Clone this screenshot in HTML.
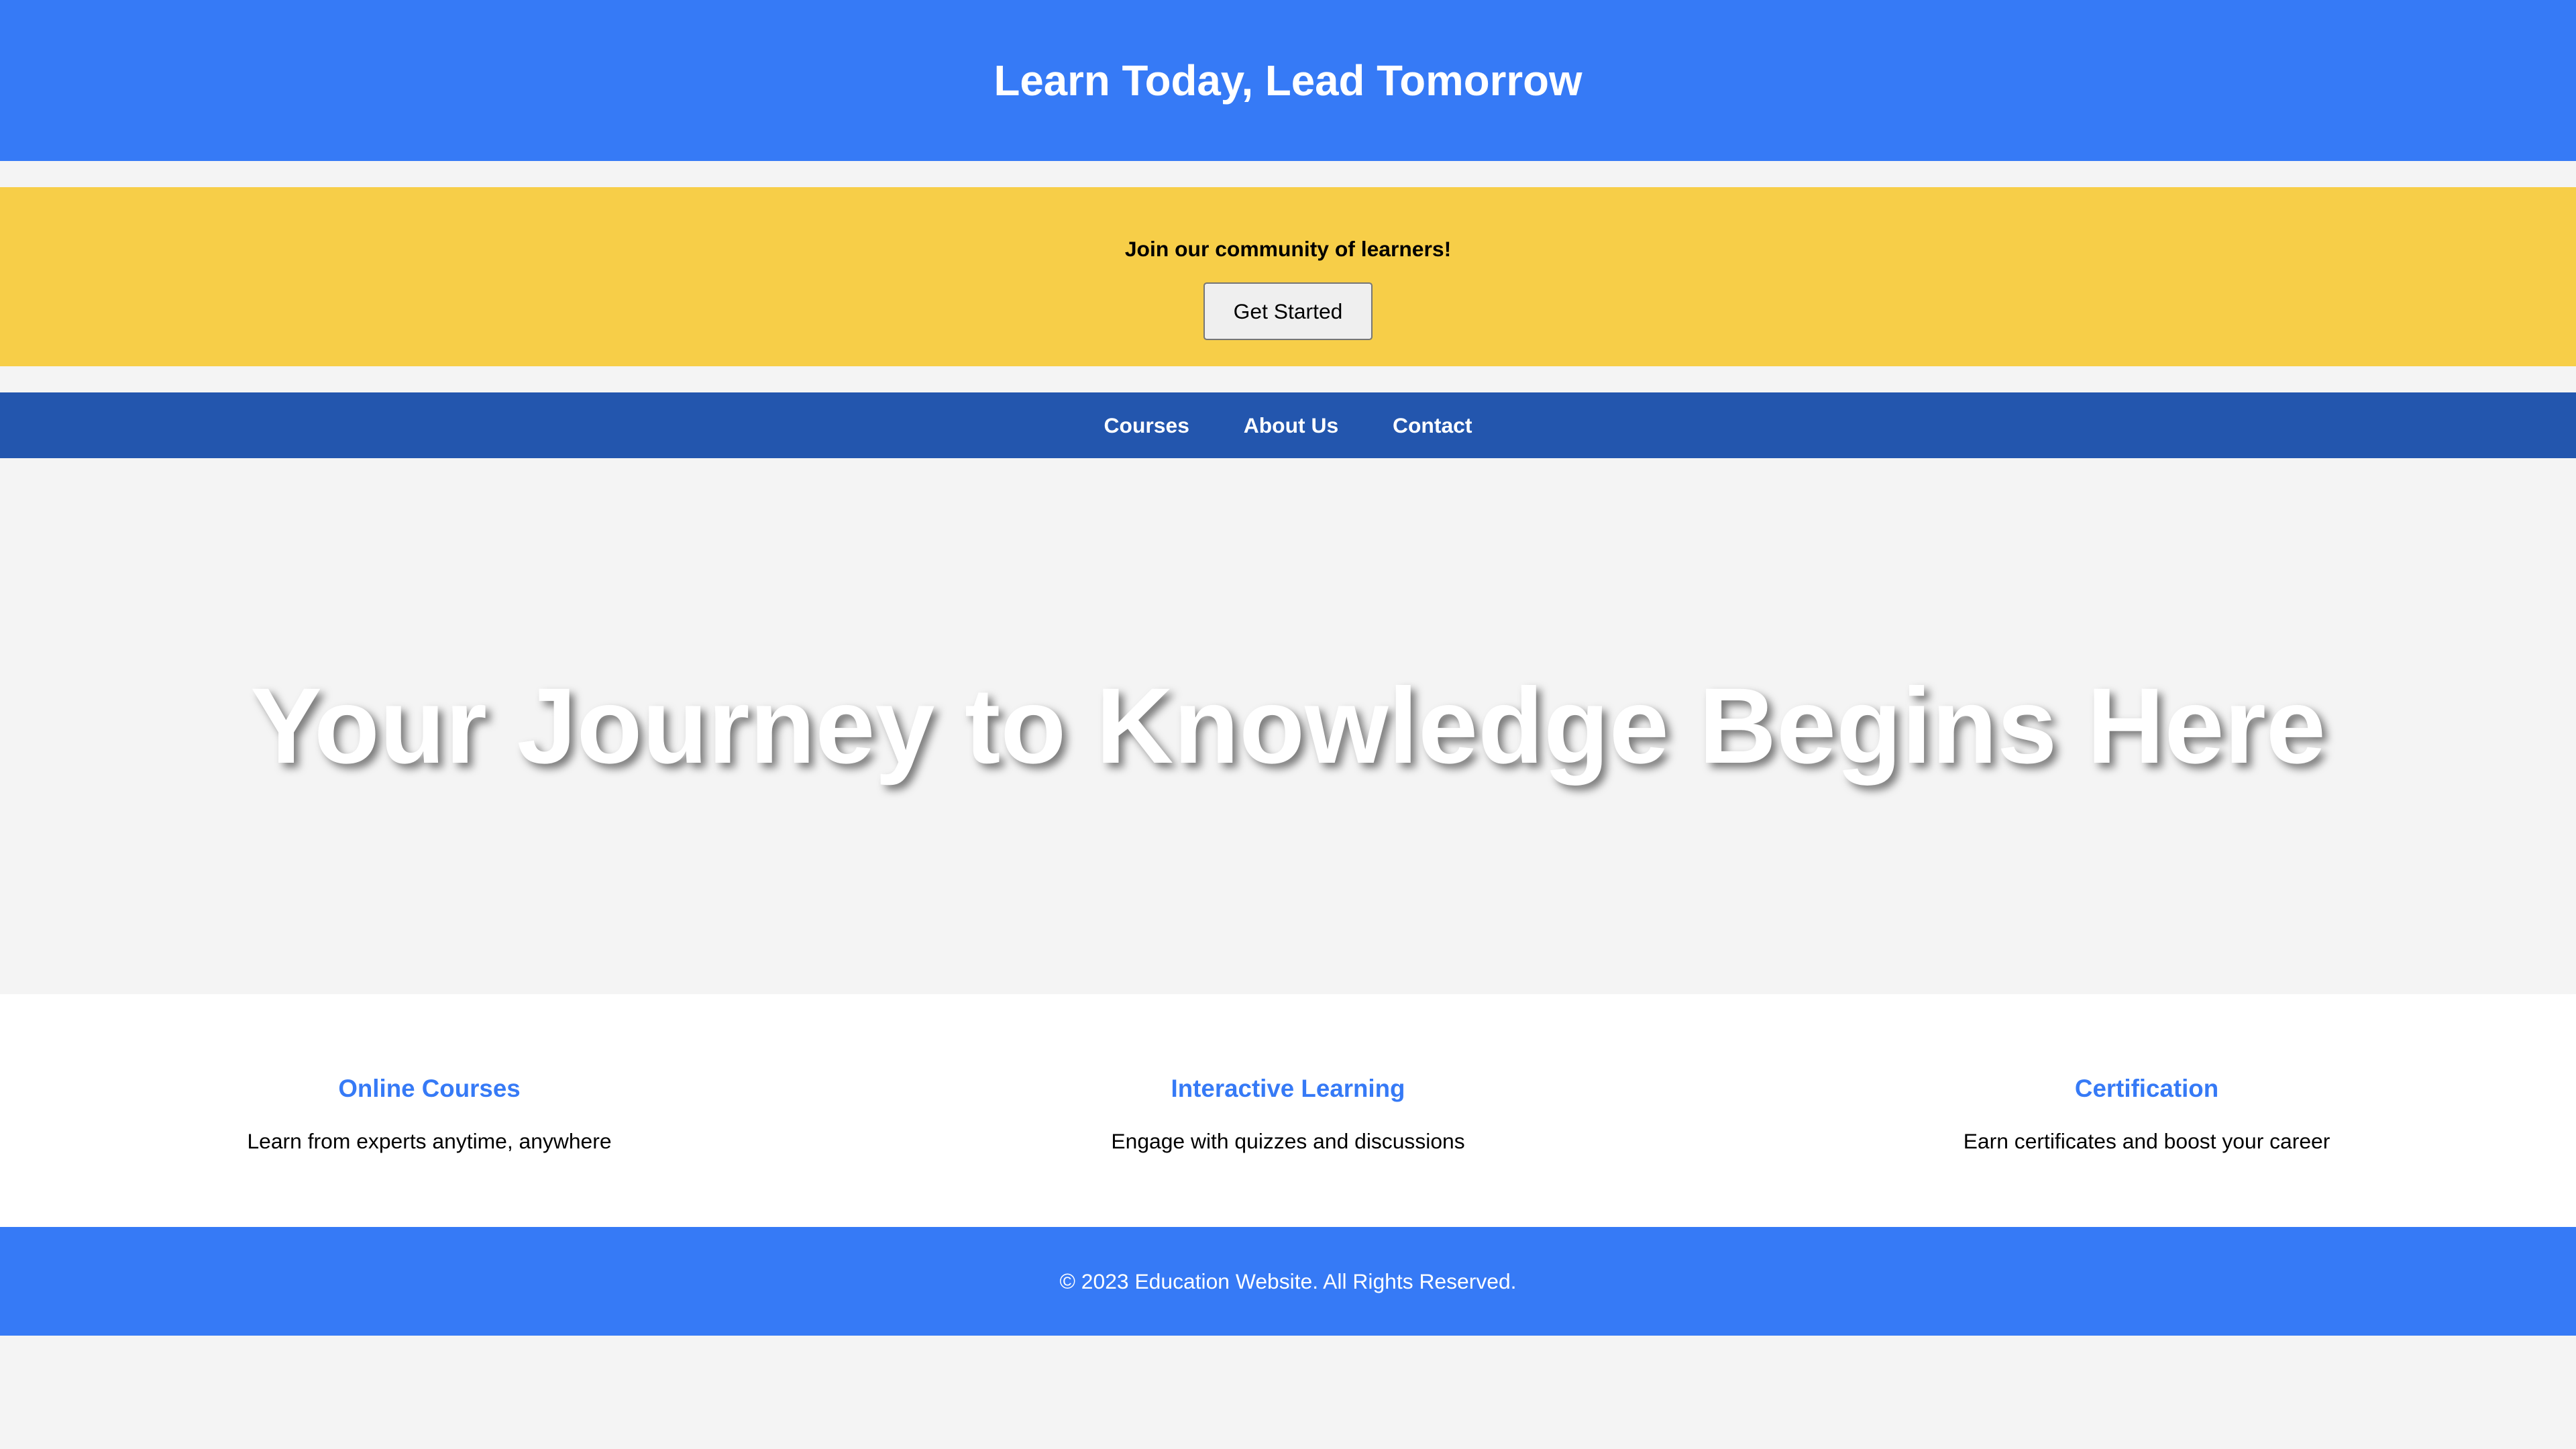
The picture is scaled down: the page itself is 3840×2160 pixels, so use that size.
<!DOCTYPE html>
<html><head><meta charset="utf-8"><style>
html{zoom:2.4490}
body{margin:0;background:#f4f4f4;font-family:"Liberation Sans",Arial,sans-serif;width:1568px;height:882px;overflow:hidden}
header{background:#367af6;height:98px;display:flex;align-items:center;justify-content:center}
header h1{margin:0;color:#fff;font-size:26px;font-weight:bold}
.cta{background:#f7ce48;margin-top:16px;height:109px;text-align:center;box-sizing:border-box;padding-top:30px}
.cta p{margin:0;font-weight:bold;font-size:13px;color:#000}
.cta button{margin-top:13px;width:103px;height:35px;font-family:inherit;font-size:13px;background:#efefef;border:1px solid #767676;border-radius:2px;color:#000}
nav{background:#2356ae;margin-top:16px;height:40px;display:flex;justify-content:center;align-items:center;gap:33px}
nav a{color:#fff;font-weight:bold;font-size:13px;text-decoration:none}
.hero{height:326px;display:flex;align-items:center;justify-content:center}
.hero h2{margin:0;color:#fff;font-size:65.4px;font-weight:bold;text-shadow:3px 3px 5px rgba(0,0,0,.5)}
.features{background:#fff;height:142px;display:flex}
.features div{flex:1;text-align:center;padding-top:49px}
.features h3{margin:0;color:#367af6;font-size:15px}
.features p{margin:16px 0 0;font-size:13px;color:#000}
footer{background:#367af6;height:66px;display:flex;align-items:center;justify-content:center;color:#fff;font-size:13px}
</style></head><body>
<header><h1>Learn Today, Lead Tomorrow</h1></header>
<div class="cta"><p>Join our community of learners!</p><button>Get Started</button></div>
<nav><a>Courses</a><a>About Us</a><a>Contact</a></nav>
<div class="hero"><h2>Your Journey to Knowledge Begins Here</h2></div>
<div class="features">
<div><h3>Online Courses</h3><p>Learn from experts anytime, anywhere</p></div>
<div><h3>Interactive Learning</h3><p>Engage with quizzes and discussions</p></div>
<div><h3>Certification</h3><p>Earn certificates and boost your career</p></div>
</div>
<footer>© 2023 Education Website. All Rights Reserved.</footer>
</body></html>
